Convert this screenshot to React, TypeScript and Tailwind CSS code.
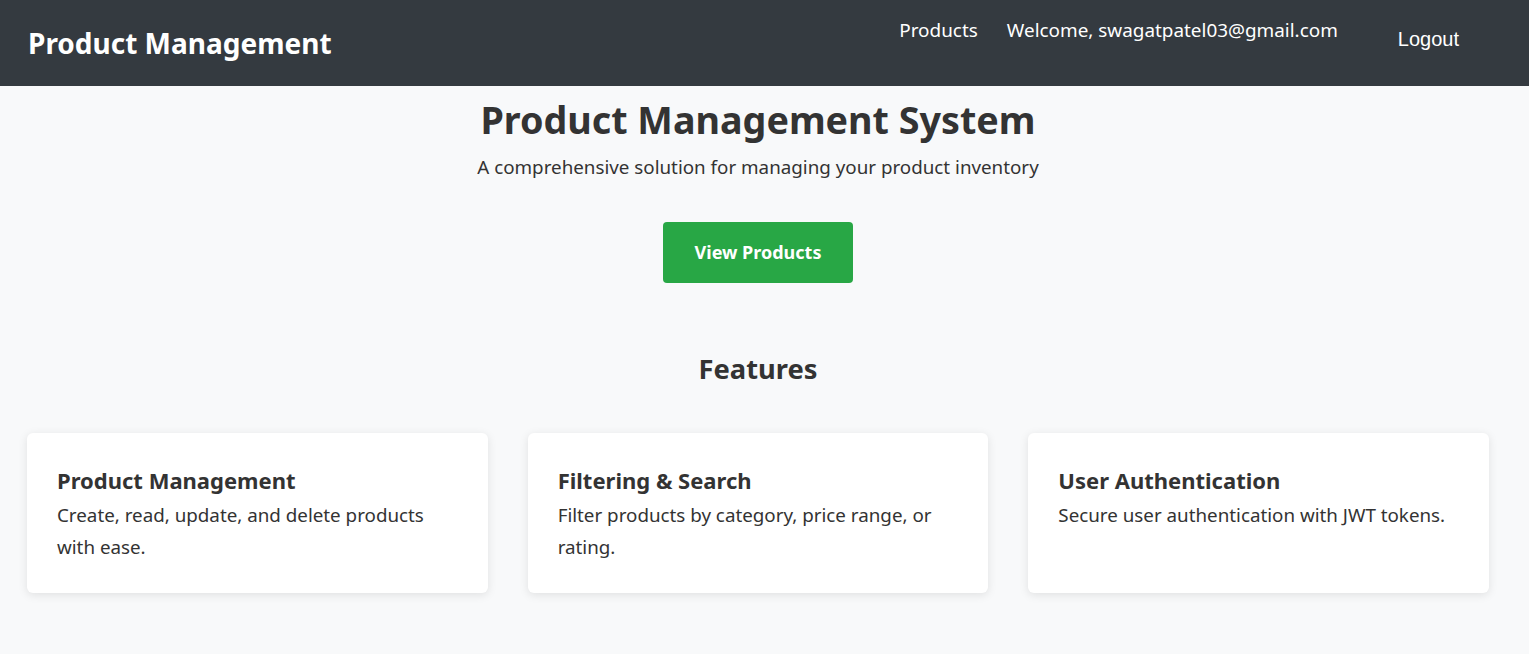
import React from 'react'

const features = [
  { title: 'Product Management', text: 'Create, read, update, and delete products with ease.' },
  { title: 'Filtering & Search', text: 'Filter products by category, price range, or rating.' },
  { title: 'User Authentication', text: 'Secure user authentication with JWT tokens.' },
]

const App: React.FC = () => {
  return (
    <div className="min-h-screen bg-[#f8f9fa] text-[#333333]" style={{ fontFamily: '"Noto Sans", sans-serif' }}>
      {/* Navbar */}
      <nav className="h-[86px] bg-[#343a40] flex items-center justify-between pl-[28px] pr-[40px]">
        <h1 className="text-[28px] font-bold text-white">Product Management</h1>
        <div className="flex items-start h-full pt-[16px]">
          <a className="text-[18.9px] text-white mr-[29px]">Products</a>
          <span className="text-[18.9px] text-white mr-[30px]">Welcome, swagatpatel03@gmail.com</span>
          <button className="text-[20px] text-white px-[30px] mt-[8px]" style={{ fontFamily: '"Liberation Sans", Arial, sans-serif' }}>
            Logout
          </button>
        </div>
      </nav>

      <main className="w-[1516px] px-[27px] pb-[60px]">
        {/* Hero */}
        <section className="flex flex-col items-center pt-[10px]">
          <h2 className="text-[37.7px] font-bold leading-[48px]">Product Management System</h2>
          <p className="text-[18.8px] mt-[9px]">A comprehensive solution for managing your product inventory</p>
          <button className="mt-[41px] w-[190px] h-[61px] rounded-[4px] bg-[#28a745] text-white text-[18px] font-bold">
            View Products
          </button>
        </section>

        {/* Features */}
        <section>
          <h3 className="text-center text-[27.3px] font-bold mt-[66px] mb-[43px]">Features</h3>
          <div className="grid grid-cols-3 gap-[40px]">
            {features.map((f) => (
              <div key={f.title} className="bg-white rounded-[6px] shadow-[0_2px_10px_rgba(0,0,0,0.1)] h-[160px] px-[30px] pt-[32px]">
                <h4 className="text-[22px] font-bold leading-[30px]">{f.title}</h4>
                <p className="text-[18.8px] leading-[32px] mt-[4px]">{f.text}</p>
              </div>
            ))}
          </div>
        </section>
      </main>
    </div>
  )
}

export default App
